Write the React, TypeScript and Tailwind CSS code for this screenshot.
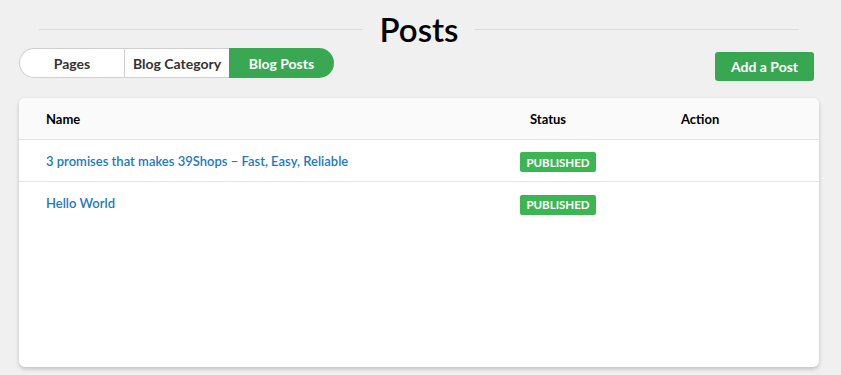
const posts = [
  { title: '3 promises that makes 39Shops – Fast, Easy, Reliable', status: 'PUBLISHED' },
  { title: 'Hello World', status: 'PUBLISHED' },
]

const tabs = ['Pages', 'Blog Category', 'Blog Posts']

export default function App() {
  const active = 'Blog Posts'

  return (
    <div className="min-h-[375px] bg-[#f0f0f0] pl-[19px] pr-[22px] pt-[10px] pb-[8px] font-['Lato',sans-serif] text-[#111]">
      <div className="flex items-center px-[20px]">
        <div className="h-px flex-1 bg-[#dcdcdc]" />
        <h1 className="px-[16px] text-[33px] leading-[38px] font-semibold text-black">Posts</h1>
        <div className="h-px flex-1 bg-[#dcdcdc]" />
      </div>

      <div className="flex items-start justify-between">
        <div className="flex">
          {tabs.map((tab, i) => (
            <button
              key={tab}
              className={
                'h-[30px] w-[105px] text-[14px] font-bold ' +
                (tab === active
                  ? 'bg-[#3aa753] text-white rounded-r-full'
                  : 'bg-white text-[#333] border-y border-[#cfcfcf] ' +
                    (i === 0 ? 'border-l rounded-l-full' : 'border-l border-[#cfcfcf]'))
              }
            >
              {tab}
            </button>
          ))}
        </div>
        <button className="mt-[4px] mr-[5px] h-[29px] w-[99px] rounded-[3px] bg-[#38a752] text-[14px] font-bold text-white">
          Add a Post
        </button>
      </div>

      <div className="mt-[17px] h-[269px] overflow-hidden rounded-[6px] bg-white shadow-[0_2px_4px_rgba(0,0,0,0.2)]">
        <div className="flex h-[42px] items-center border-b border-[#e3e3e3] bg-[#fafafa] pt-[2px] text-[13px] font-bold text-black">
          <div className="w-[501px] pl-[27px]">Name</div>
          <div className="w-[161px] pl-[10px]">Status</div>
          <div>Action</div>
        </div>
        {posts.map((post, i) => (
          <div
            key={post.title}
            className={'flex h-[42px] items-center ' + (i < posts.length - 1 ? 'border-b border-[#e3e3e3]' : '')}
          >
            <div className="w-[501px] pl-[27px] pt-[2px] text-[13px] font-semibold text-[#2378c2]">{post.title}</div>
            <div className="w-[161px]">
              <span className="inline-flex h-[20px] w-[76px] items-center justify-center rounded-[2px] bg-[#3cb553] text-[11.5px] font-bold text-white">
                {post.status}
              </span>
            </div>
            <div />
          </div>
        ))}
      </div>
    </div>
  )
}
